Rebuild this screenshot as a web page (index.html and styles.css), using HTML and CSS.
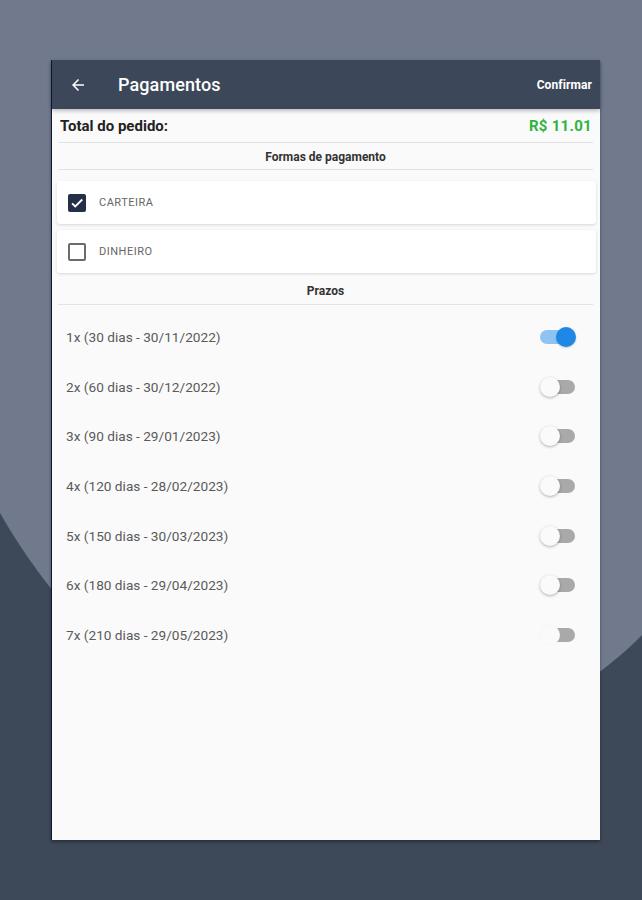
FILE: index.html
```html
<!DOCTYPE html>
<html lang="pt">
<head>
<meta charset="utf-8">
<title>Pagamentos</title>
<link rel="stylesheet" href="styles.css">
</head>
<body>
<svg class="backdrop" width="642" height="900" viewBox="0 0 642 900" aria-hidden="true">
  <path d="M0 513 C180 826 492 788 642 635 L642 900 L0 900 Z" fill="#3d4859"/>
</svg>
<div class="screen">
  <header class="appbar">
    <svg class="back" width="18" height="18" viewBox="0 0 24 24"><path d="M20 11H7.83l5.59-5.59L12 4l-8 8 8 8 1.41-1.41L7.83 13H20v-2z" fill="#fff"/></svg>
    <h1 class="title">Pagamentos</h1>
    <span class="action">Confirmar</span>
  </header>
  <main class="content">
    <div class="total">
      <span class="total-label">Total do pedido:</span>
      <span class="total-value">R$ 11.01</span>
    </div>
    <div class="section">Formas de pagamento</div>
    <div class="card">
      <span class="check checked"><svg width="14" height="14" viewBox="0 0 24 24"><path d="M3.5 12.5l5.5 5.5L21 6" fill="none" stroke="#fff" stroke-width="3.2"/></svg></span>
      <span class="card-label">CARTEIRA</span>
    </div>
    <div class="card">
      <span class="check"></span>
      <span class="card-label">DINHEIRO</span>
    </div>
    <div class="section section-prazos">Prazos</div>
    <ul class="terms">
      <li class="term"><span>1x (30 dias - 30/11/2022)</span><span class="switch on"><span class="thumb"></span></span></li>
      <li class="term"><span>2x (60 dias - 30/12/2022)</span><span class="switch"><span class="thumb"></span></span></li>
      <li class="term"><span>3x (90 dias - 29/01/2023)</span><span class="switch"><span class="thumb"></span></span></li>
      <li class="term"><span>4x (120 dias - 28/02/2023)</span><span class="switch"><span class="thumb"></span></span></li>
      <li class="term"><span>5x (150 dias - 30/03/2023)</span><span class="switch"><span class="thumb"></span></span></li>
      <li class="term"><span>6x (180 dias - 29/04/2023)</span><span class="switch"><span class="thumb"></span></span></li>
      <li class="term"><span>7x (210 dias - 29/05/2023)</span><span class="switch faint"><span class="thumb"></span></span></li>
    </ul>
  </main>
</div>
</body>
</html>
```

FILE: styles.css
```css
* { box-sizing: border-box; }
html, body { margin: 0; padding: 0; }
body {
  width: 642px;
  height: 900px;
  background: #707a8c;
  font-family: Roboto, "Noto Sans", "Liberation Sans", sans-serif;
  position: relative;
  overflow: hidden;
  padding-top: 60px;
}
.backdrop {
  position: absolute;
  left: 0;
  top: 0;
  z-index: 0;
}
.screen {
  position: relative;
  z-index: 1;
  margin-left: 51px;
  width: 549px;
  height: 780px;
  background: #fafafa;
  border-left: 1px solid #101838;
  box-shadow: 0 2px 3px rgba(0,0,0,0.35);
  display: flex;
  flex-direction: column;
}
.appbar {
  height: 49px;
  background: #3c4759;
  display: flex;
  align-items: center;
  padding: 0 8px 0 17px;
  box-shadow: 0 2px 4px rgba(0,0,0,0.25);
}
.back { flex: none; }
.title {
  margin: 0 0 0 31px;
  font-size: 18px;
  font-weight: 500;
  color: #fff;
  flex: 1;
  letter-spacing: 0.1px;
}
.action {
  color: #fff;
  font-size: 12px;
  font-weight: 700;
  letter-spacing: 0.1px;
}
.content {
  padding: 0 7px 0 6px;
  display: flex;
  flex-direction: column;
}
.total {
  height: 34px;
  display: flex;
  align-items: center;
  justify-content: space-between;
  padding: 0 1px 0 2px;
  border-bottom: 1px solid #e3e3e3;
}
.total-label {
  font-size: 15px;
  font-weight: 700;
  color: #222;
}
.total-value {
  font-size: 15px;
  font-weight: 700;
  color: #2eb33f;
  letter-spacing: 0.3px;
}
.section {
  height: 27px;
  display: flex;
  align-items: center;
  justify-content: center;
  padding-top: 2px;
  font-size: 12px;
  font-weight: 700;
  color: #333;
  border-bottom: 1px solid #e3e3e3;
  margin-bottom: 11px;
}
.section-prazos {
  height: 32px;
  padding-top: 5px;
  margin-bottom: 7px;
}
.card {
  height: 43px;
  margin: 0 -3px 6px -1px;
  background: #fff;
  border-radius: 3px;
  box-shadow: 0 1px 3px rgba(0,0,0,0.14);
  display: flex;
  align-items: center;
  padding-left: 11px;
}
.card + .card { margin-bottom: 0; }
.check {
  width: 18px;
  height: 18px;
  border: 2px solid #6b6b6b;
  border-radius: 2px;
  display: flex;
  align-items: center;
  justify-content: center;
}
.check.checked {
  background: #243048;
  border-color: #243048;
}
.card-label {
  margin-left: 13px;
  font-size: 11px;
  color: #666;
  letter-spacing: 0.5px;
}
.terms {
  list-style: none;
  margin: 0;
  padding: 0 17px 0 8px;
}
.term {
  height: 49.7px;
  display: flex;
  align-items: center;
  justify-content: space-between;
  font-size: 13.65px;
  color: #5a5a5a;
}
.switch {
  position: relative;
  width: 33px;
  height: 14px;
  border-radius: 7px;
  background: #a9a9a9;
  margin-right: 1px;
}
.switch .thumb {
  position: absolute;
  top: -3px;
  left: -2px;
  width: 20px;
  height: 20px;
  border-radius: 50%;
  background: #fafafa;
  box-shadow: 0 1px 3px rgba(0,0,0,0.3);
}
.switch.on {
  background: #8fc3f3;
  margin-right: 3px;
}
.switch.on .thumb {
  left: auto;
  right: -3px;
  background: #1f87e5;
  box-shadow: 0 1px 2px rgba(0,0,0,0.2);
}
.switch.faint .thumb {
  box-shadow: 0 0 1px rgba(0,0,0,0.08);
}
```
